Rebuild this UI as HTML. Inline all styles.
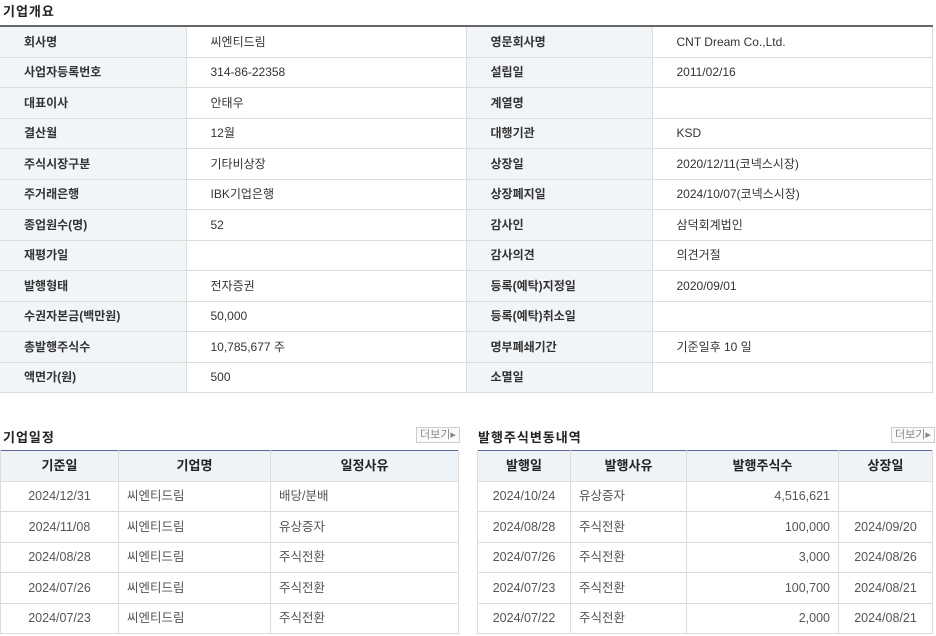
<!DOCTYPE html>
<html><head><meta charset="utf-8"><style>
body{margin:0;width:936px;height:636px;background:#fff;font-family:"Liberation Sans","Noto Sans CJK KR",sans-serif;color:#333;position:relative;overflow:hidden}
.t{position:absolute;font-size:13px;font-weight:bold;color:#222;letter-spacing:1px}
table{position:absolute;border-collapse:collapse;table-layout:fixed;font-size:12px}
td,th{line-height:16px;vertical-align:middle}
#top{left:0;top:25px;width:932px;border-top:2px solid #666}
#top td{height:29.5px;border-bottom:1px solid #dcdcdc;padding:0;color:#333}
#top td.l{background:#f2f5f8;padding-left:24px;font-weight:bold;color:#333;border-right:1px solid #dcdcdc}
#top td.v{padding-left:24px;border-right:1px solid #dcdcdc}
.b{top:450px;border-top:1px solid #5a6a9c}
.b th{height:29.5px;background:#eef3f8;font-size:13px;font-weight:bold;color:#222;border:1px solid #dcdcdc;border-top:none;padding:0}
.b td{height:29.5px;border:1px solid #dcdcdc;color:#555;padding:0 8px;font-size:12.5px}
.c{text-align:center}.r{text-align:right}
.more{position:absolute;top:427px;font-size:11px;color:#888;border:1px solid #ccc;padding:0 3px;line-height:14px;background:#fafafa}
</style></head><body>
<div class="t" style="left:3px;top:1px">기업개요</div>
<table id="top"><colgroup><col style="width:186px"><col style="width:280px"><col style="width:186px"><col style="width:280px"></colgroup>
<tr><td class="l">회사명</td><td class="v">씨엔티드림</td><td class="l">영문회사명</td><td class="v">CNT Dream Co.,Ltd.</td></tr>
<tr><td class="l">사업자등록번호</td><td class="v">314-86-22358</td><td class="l">설립일</td><td class="v">2011/02/16</td></tr>
<tr><td class="l">대표이사</td><td class="v">안태우</td><td class="l">계열명</td><td class="v"></td></tr>
<tr><td class="l">결산월</td><td class="v">12월</td><td class="l">대행기관</td><td class="v">KSD</td></tr>
<tr><td class="l">주식시장구분</td><td class="v">기타비상장</td><td class="l">상장일</td><td class="v">2020/12/11(코넥스시장)</td></tr>
<tr><td class="l">주거래은행</td><td class="v">IBK기업은행</td><td class="l">상장폐지일</td><td class="v">2024/10/07(코넥스시장)</td></tr>
<tr><td class="l">종업원수(명)</td><td class="v">52</td><td class="l">감사인</td><td class="v">삼덕회계법인</td></tr>
<tr><td class="l">재평가일</td><td class="v"></td><td class="l">감사의견</td><td class="v">의견거절</td></tr>
<tr><td class="l">발행형태</td><td class="v">전자증권</td><td class="l">등록(예탁)지정일</td><td class="v">2020/09/01</td></tr>
<tr><td class="l">수권자본금(백만원)</td><td class="v">50,000</td><td class="l">등록(예탁)취소일</td><td class="v"></td></tr>
<tr><td class="l">총발행주식수</td><td class="v">10,785,677 주</td><td class="l">명부폐쇄기간</td><td class="v">기준일후 10 일</td></tr>
<tr><td class="l">액면가(원)</td><td class="v">500</td><td class="l">소멸일</td><td class="v"></td></tr>
</table>
<div class="t" style="left:3px;top:427px">기업일정</div>
<div class="more" style="left:416px">더보기▸</div>
<div class="t" style="left:478px;top:427px">발행주식변동내역</div>
<div class="more" style="left:891px">더보기▸</div>
<table class="b" style="left:0;width:458px"><colgroup><col style="width:118px"><col style="width:152px"><col style="width:188px"></colgroup>
<tr><th>기준일</th><th>기업명</th><th>일정사유</th></tr>
<tr><td class="c">2024/12/31</td><td>씨엔티드림</td><td>배당/분배</td></tr>
<tr><td class="c">2024/11/08</td><td>씨엔티드림</td><td>유상증자</td></tr>
<tr><td class="c">2024/08/28</td><td>씨엔티드림</td><td>주식전환</td></tr>
<tr><td class="c">2024/07/26</td><td>씨엔티드림</td><td>주식전환</td></tr>
<tr><td class="c">2024/07/23</td><td>씨엔티드림</td><td>주식전환</td></tr>
</table>
<table class="b" style="left:477px;width:455px"><colgroup><col style="width:93px"><col style="width:116px"><col style="width:152px"><col style="width:94px"></colgroup>
<tr><th>발행일</th><th>발행사유</th><th>발행주식수</th><th>상장일</th></tr>
<tr><td class="c">2024/10/24</td><td>유상증자</td><td class="r">4,516,621</td><td class="c"></td></tr>
<tr><td class="c">2024/08/28</td><td>주식전환</td><td class="r">100,000</td><td class="c">2024/09/20</td></tr>
<tr><td class="c">2024/07/26</td><td>주식전환</td><td class="r">3,000</td><td class="c">2024/08/26</td></tr>
<tr><td class="c">2024/07/23</td><td>주식전환</td><td class="r">100,700</td><td class="c">2024/08/21</td></tr>
<tr><td class="c">2024/07/22</td><td>주식전환</td><td class="r">2,000</td><td class="c">2024/08/21</td></tr>
</table>
</body></html>
